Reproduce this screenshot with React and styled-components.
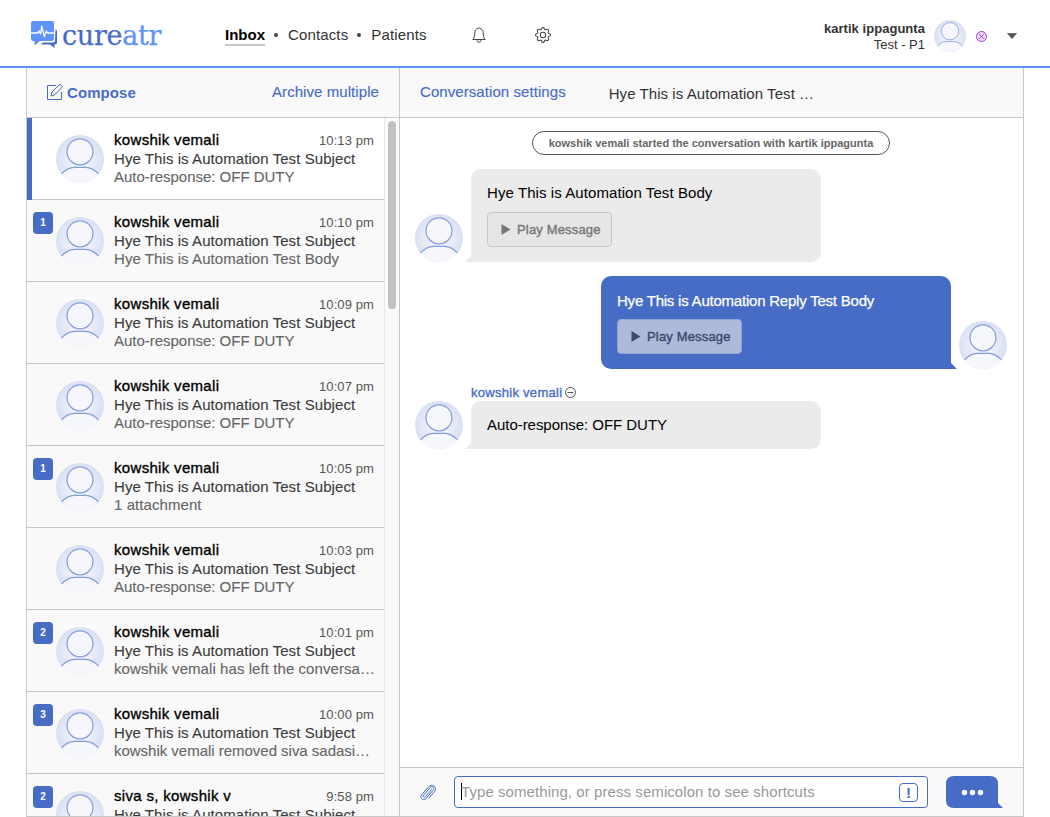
import React from 'react';
import styled, { createGlobalStyle, css } from 'styled-components';
import { BsGear } from 'react-icons/bs';

const BLUE = '#476cc6';
const SKY = '#5f92fb';
const LINE = '#c8c8c8';

const GlobalStyle = createGlobalStyle`
  *, *::before, *::after { box-sizing: border-box; }
  body {
    margin: 0;
    background: #fff;
    color: #333;
    font-family: "Liberation Sans", Arial, sans-serif;
    font-size: 15px;
    overflow: hidden;
  }
  svg { display: block; flex: none; }
`;

const medium = css`-webkit-text-stroke: 0.35px currentColor;`;

const Page = styled.div`
  display: flex;
  flex-direction: column;
  height: 817px;
  width: 1050px;
`;

const Header = styled.header`
  display: flex;
  align-items: center;
  height: 68px;
  border-bottom: 2px solid ${SKY};
  padding: 4px 33px 0 30px;
`;

const Logo = styled.div`
  display: flex;
  align-items: center;
  width: 195px;
`;

const Wordmark = styled.span`
  margin-left: 4px;
  font-family: "DejaVu Serif", serif;
  font-size: 27px;
  line-height: 30px;
  padding-top: 1px;
  letter-spacing: -0.3px;
  -webkit-text-stroke: 0.25px currentColor;
  color: ${BLUE};
  em { font-style: normal; color: ${SKY}; }
`;

const Nav = styled.nav`
  display: flex;
  align-items: center;
  width: 247px;
  gap: 9px;
  padding-top: 1px;
  color: #333;
`;

const NavLink = styled.a`
  line-height: 18px;
  letter-spacing: ${p => (p.$active ? 0 : 0.14)}px;
  padding: ${p => (p.$active ? '1px 0 0' : '1px 0 2px')};
  font-weight: ${p => (p.$active ? 700 : 400)};
  color: ${p => (p.$active ? '#000' : '#333')};
  border-bottom: ${p => (p.$active ? '2px solid #c8c8c8' : '0')};
`;

const Dot = styled.i`
  width: 4px;
  height: 4px;
  border-radius: 50%;
  background: #444;
  margin: 0 1px 1px 0;
`;

const HeaderIcons = styled.div`
  display: flex;
  align-items: center;
  gap: 49px;
  color: #444;
`;

const Account = styled.div`
  display: flex;
  align-items: center;
  margin-left: auto;
  padding-top: 2px;
`;

const AccountName = styled.div`
  font-size: 13px;
  line-height: 16px;
  text-align: right;
  margin: 2px 9px 0 0;
  b { letter-spacing: 0.04px; display: block; }
`;

const Status = styled.span`
  margin: 0 20px 0 10px;
`;

const Workspace = styled.main`
  display: grid;
  grid-template-columns: 373px 1fr;
  width: 998px;
  height: 749px;
  margin-left: 26px;
  border: solid ${LINE};
  border-width: 0 1px 1px;
`;

const Column = styled.section`
  display: flex;
  flex-direction: column;
  min-width: 0;
  min-height: 0;
  border-right: ${p => (p.$divided ? `1px solid ${LINE}` : '0')};
`;

const Bar = styled.div`
  display: flex;
  align-items: center;
  height: 50px;
  flex: none;
  padding: 0 20px;
  background: #f9f9f9;
  border-bottom: 1px solid ${LINE};
`;

const BarLink = styled.a`
  display: flex;
  align-items: center;
  gap: 4px;
  color: ${BLUE};
  font-weight: ${p => (p.$strong ? 700 : 400)};
  letter-spacing: 0.07px;
  ${p => !p.$strong && 'padding-bottom: 2px; -webkit-text-stroke: 0.15px currentColor;'}
  margin-left: ${p => (p.$end ? 'auto' : 0)};
`;

const Subject = styled.h1`
  margin: 2px 0 0 43px;
  font-size: 15px;
  font-weight: 400;
  letter-spacing: 0.06px;
`;

const ListArea = styled.div`
  display: flex;
  flex: 1;
  min-height: 0;
`;

const List = styled.div`
  width: 357px;
  overflow: hidden;
  background: #f9f9f9;
`;

const Track = styled.div`
  width: 15px;
  background: #fafafa;
  border-left: 1px solid #e6e6e6;
  padding: 3px 0 0 3px;
`;

const Thumb = styled.div`
  width: 8px;
  height: 188px;
  border-radius: 4px;
  background: #c1c1c1;
`;

const Row = styled.article`
  display: flex;
  height: 82px;
  background: ${p => (p.$active ? '#fff' : '#f9f9f9')};
  box-shadow: ${p => (p.$active ? `inset 5px 0 ${BLUE}, ` : '')}inset 0 -1px ${LINE};
`;

const Gutter = styled.div`
  width: 29px;
  padding: 12px 0 0 6px;
`;

const Badge = styled.span`
  display: block;
  width: 20px;
  height: 22px;
  border-radius: 4px;
  background: ${BLUE};
  color: #fff;
  font-size: 10px;
  font-weight: 700;
  line-height: 21px;
  text-align: center;
`;

const RowAvatar = styled.div`
  padding-top: 17px;
`;

const RowText = styled.div`
  flex: 1;
  min-width: 0;
  padding: 13px 10px 0;
`;

const RowTop = styled.div`
  display: flex;
  justify-content: space-between;
  height: 19px;
  line-height: 18px;
`;

const Name = styled.span`
  color: #000;
  letter-spacing: 0.32px;
  ${medium}
`;

const Time = styled.time`
  font-size: 13px;
  line-height: 19px;
  color: #555;
  letter-spacing: 0.1px;
`;

const Line = styled.p`
  margin: 0;
  line-height: 18px;
  letter-spacing: ${p => (p.$tight ? -0.02 : 0.07)}px;
  color: ${p => (p.$soft ? '#666' : '#3c3c3c')};
  -webkit-text-stroke: 0.12px currentColor;
  white-space: nowrap;
`;

const Thread = styled.div`
  flex: 1;
  display: flex;
  flex-direction: column;
  padding: 13px 16px 0 15px;
`;

const Notice = styled.div`
  align-self: center;
  width: 358px;
  height: 24px;
  margin-bottom: 14px;
  border: 1px solid #555;
  border-radius: 12px;
  color: #666;
  font-size: 11px;
  font-weight: 700;
  line-height: 22px;
  text-align: center;
`;

const Message = styled.div`
  display: flex;
  align-items: flex-end;
  gap: 8px;
  flex-direction: ${p => (p.$own ? 'row-reverse' : 'row')};
  margin-bottom: 14px;
`;

const Bubble = styled.div`
  position: relative;
  width: 350px;
  height: ${p => (p.$short ? 48 : 93)}px;
  padding: ${p => (p.$own ? 16 : 15)}px 16px 0;
  border-radius: ${p => (p.$own ? '10px 10px 0 10px' : '10px 10px 10px 0')};
  background: ${p => (p.$own ? BLUE : '#ebebeb')};
  color: ${p => (p.$own ? '#fff' : '#000')};
  line-height: 18px;
  letter-spacing: ${p => (p.$own ? -0.22 : p.$short ? -0.04 : 0.08)}px;
  ${p => p.$own && '-webkit-text-stroke: 0.25px currentColor;'}

  &::after {
    content: '';
    position: absolute;
    bottom: 0;
    ${p => (p.$own ? 'right' : 'left')}: -6px;
    width: 6px;
    height: 6px;
    background: inherit;
    clip-path: ${p => (p.$own ? 'polygon(0 0, 100% 100%, 0 100%)' : 'polygon(100% 0, 100% 100%, 0 100%)')};
  }
`;

const PlayButton = styled.button`
  display: flex;
  align-items: center;
  gap: 6px;
  width: 125px;
  height: 35px;
  margin-top: ${p => (p.$own ? 9 : 10)}px;
  padding: 0 0 0 13px;
  border: 1px solid ${p => (p.$own ? '#93a4cf' : '#c6c6c6')};
  border-radius: 4px;
  background: ${p => (p.$own ? '#adbadc' : '#e6e6e6')};
  color: ${p => (p.$own ? '#3d4a6b' : '#777')};
  font: 13px "Liberation Sans", Arial, sans-serif;
  letter-spacing: 0.16px;
  -webkit-text-stroke: 0.4px currentColor;
`;

const Sender = styled.div`
  display: flex;
  align-items: center;
  gap: 3px;
  height: 18px;
  padding-left: 56px;
  color: ${BLUE};
  font-size: 13px;
  letter-spacing: 0.28px;
  ${medium}
`;

const Composer = styled.footer`
  display: flex;
  align-items: center;
  height: 49px;
  padding: 0 20px;
  border-top: 1px solid ${LINE};
  background: #f9f9f9;
`;

const Field = styled.div`
  display: flex;
  align-items: center;
  width: 474px;
  height: 32px;
  margin: 0 18px;
  padding: 0 9px 0 6px;
  border: 1px solid ${BLUE};
  border-radius: 4px;
  background: #fff;
`;

const Caret = styled.i`
  width: 1px;
  height: 17px;
  margin: 0 -1px 1px 0;
  background: #000;
`;

const Placeholder = styled.span`
  color: #999;
  letter-spacing: 0.07px;
  padding-bottom: 2px;
`;

const Priority = styled.span`
  width: 19px;
  height: 19px;
  margin-left: auto;
  border: 1px solid ${BLUE};
  border-radius: 4px;
  color: ${BLUE};
  font-size: 15px;
  font-weight: 700;
  line-height: 18px;
  text-align: center;
`;

function LogoMark() {
  return (
    <svg width="28" height="28" viewBox="0 0 28 28">
      <path d="M3 0h19q2 0 2 2v16q0 2-2 2H10l-5.500 4.600V20H3q-2 0-2-2V2q0-2 2-2z" fill={SKY} />
      <path d="M25.500 8.500q1.500 0 1.500 2v11q0 2-2 2h-.5v3.500l-4.500-3.500H10.500l2.500-2h10q2 0 2-2z" fill={BLUE} />
      <path d="M1 12h6.500l1.500-2 1.700 3 1-8 2.600 10.500 2-5.500 1.200 2H24" fill="none" stroke="#fff" strokeWidth="1.300" strokeLinejoin="round" />
    </svg>
  );
}

function Avatar({ size = 48 }) {
  const id = React.useId();
  return (
    <svg width={size} height={size} viewBox="0 0 48 48">
      <defs>
        <radialGradient id={id}>
          <stop offset="0.400" stopColor="#eef1fa" />
          <stop offset="1" stopColor="#d9e0f2" />
        </radialGradient>
        <clipPath id={`${id}c`}><circle cx="24" cy="24" r="24" /></clipPath>
      </defs>
      <circle cx="24" cy="24" r="24" fill={`url(#${id})`} />
      <g clipPath={`url(#${id}c)`} fill="#f5f7fd">
        <path d="M5 39.500C9 34.500 13.500 32.200 18.500 32.200h11c5 0 9.500 2.300 13.500 7.300V48H5z" />
        <path d="M5.500 39.200C9.500 34.400 13.500 32.300 18.500 32.300h11c5 0 9 2.100 13 6.900" fill="none" stroke="#829ddc" strokeWidth="1.200" />
        <circle cx="24" cy="16.800" r="13" stroke="#829ddc" strokeWidth="1.200" />
      </g>
    </svg>
  );
}

function Bell() {
  return (
    <svg width="14" height="16" viewBox="0 0 14 16" fill="none" stroke="currentColor" strokeWidth="1">
      <path d="M5.900 1.500q1.100-1.300 2.200 0c2.200.5 3.100 2.200 3.100 4.200 0 3.500.5 5 2 6.800H.8c1.500-1.800 2-3.300 2-6.800 0-2 .9-3.700 3.100-4.200z" />
      <path d="M5 13.200a2 2 0 0 0 4 0" />
    </svg>
  );
}

function ComposeIcon() {
  return (
    <svg width="16" height="17" viewBox="0 0 16 17" fill="none" stroke={BLUE} strokeWidth="1">
      <path d="M9 1.500H.5v14h14V8" />
      <path d="M4 12l1-4L12 1q1-.8 2 .1l.5.500q.9 1 .1 2L7.600 11z" />
    </svg>
  );
}

function Clip() {
  return (
    <svg width="16" height="17" viewBox="0 0 16 17" fill="none" stroke={BLUE} strokeWidth="1" strokeLinecap="round">
      <path d="M11.500 5.500L5.400 12.700c-1.300 1.400-3-.1-1.900-1.500L10 3.700c2-2.300 5 .2 3.100 2.500L6.300 14.300C3.400 17.600-1 13.900 1.700 10.700L8.700 2.600C12-.8 17.300 3 14.800 7.200L9 14" />
    </svg>
  );
}

function StatusOff() {
  return (
    <svg width="11" height="11" viewBox="0 0 11 11" fill="#ecd9fa" stroke="#a23be0">
      <circle cx="5.500" cy="5.500" r="5" />
      <path d="M3.300 3.300l4.400 4.400M7.700 3.300L3.300 7.700" />
    </svg>
  );
}

function OffDuty() {
  return (
    <svg width="11" height="11" viewBox="0 0 11 11" fill="none" stroke="#555">
      <circle cx="5.500" cy="5.500" r="5" />
      <path d="M2.500 5.500h6" />
    </svg>
  );
}

function SendIcon() {
  return (
    <svg width="57" height="32" viewBox="0 0 57 32">
      <path d="M8 0h36q8 0 8 8v19l5 5H8q-8 0-8-8V8q0-8 8-8z" fill={BLUE} />
      <g fill="#fff">
        <circle cx="18.500" cy="16.500" r="2.700" />
        <circle cx="26.500" cy="16.500" r="2.700" />
        <circle cx="34.500" cy="16.500" r="2.700" />
      </g>
    </svg>
  );
}

function Play({ own }) {
  return (
    <PlayButton $own={own}>
      <svg width="10" height="11" viewBox="0 0 10 11"><path d="M.5 0l9 5.500-9 5.500z" fill="currentColor" stroke="none" /></svg>
      Play Message
    </PlayButton>
  );
}

const OFF = 'Auto-response: OFF DUTY';
const conversations = [
  { time: '10:13 pm', preview: OFF, active: true, tight: true },
  { time: '10:10 pm', preview: 'Hye This is Automation Test Body', count: 1 },
  { time: '10:09 pm', preview: OFF, tight: true },
  { time: '10:07 pm', preview: OFF, tight: true },
  { time: '10:05 pm', preview: '1 attachment', count: 1 },
  { time: '10:03 pm', preview: OFF, tight: true },
  { time: '10:01 pm', preview: 'kowshik vemali has left the conversa…', count: 2 },
  { time: '10:00 pm', preview: 'kowshik vemali removed siva sadasi…', count: 3, tight: true },
  { name: 'siva s, kowshik v', time: '9:58 pm', count: 2 },
];

export default function App() {
  return (
    <Page>
      <GlobalStyle />
      <Header>
        <Logo>
          <LogoMark />
          <Wordmark>cure<em>atr</em></Wordmark>
        </Logo>
        <Nav>
          <NavLink $active>Inbox</NavLink>
          <Dot />
          <NavLink>Contacts</NavLink>
          <Dot />
          <NavLink>Patients</NavLink>
        </Nav>
        <HeaderIcons>
          <Bell />
          <BsGear size={16} />
        </HeaderIcons>
        <Account>
          <AccountName><b>kartik ippagunta</b>Test - P1</AccountName>
          <Avatar size={32} />
          <Status><StatusOff /></Status>
          <svg width="10" height="6" viewBox="0 0 10 6"><path d="M.3.300h9.400L5 5.700z" fill="#555" stroke="#555" strokeLinejoin="round" strokeWidth=".5" /></svg>
        </Account>
      </Header>
      <Workspace>
        <Column $divided>
          <Bar>
            <BarLink $strong><ComposeIcon />Compose</BarLink>
            <BarLink $end>Archive multiple</BarLink>
          </Bar>
          <ListArea>
            <List>
              {conversations.map(c => (
                <Row key={c.time} $active={c.active}>
                  <Gutter>{c.count && <Badge>{c.count}</Badge>}</Gutter>
                  <RowAvatar><Avatar /></RowAvatar>
                  <RowText>
                    <RowTop><Name>{c.name || 'kowshik vemali'}</Name><Time>{c.time}</Time></RowTop>
                    <Line>Hye This is Automation Test Subject</Line>
                    {c.preview && <Line $soft $tight={c.tight}>{c.preview}</Line>}
                  </RowText>
                </Row>
              ))}
            </List>
            <Track><Thumb /></Track>
          </ListArea>
        </Column>
        <Column>
          <Bar>
            <BarLink>Conversation settings</BarLink>
            <Subject>Hye This is Automation Test …</Subject>
          </Bar>
          <Thread>
            <Notice>kowshik vemali started the conversation with kartik ippagunta</Notice>
            <Message>
              <Avatar />
              <Bubble>Hye This is Automation Test Body<Play /></Bubble>
            </Message>
            <Message $own>
              <Avatar />
              <Bubble $own>Hye This is Automation Reply Test Body<Play own /></Bubble>
            </Message>
            <Sender>kowshik vemali <OffDuty /></Sender>
            <Message>
              <Avatar />
              <Bubble $short>{OFF}</Bubble>
            </Message>
          </Thread>
          <Composer>
            <Clip />
            <Field>
              <Caret />
              <Placeholder>Type something, or press semicolon to see shortcuts</Placeholder>
              <Priority>!</Priority>
            </Field>
            <SendIcon />
          </Composer>
        </Column>
      </Workspace>
    </Page>
  );
}
